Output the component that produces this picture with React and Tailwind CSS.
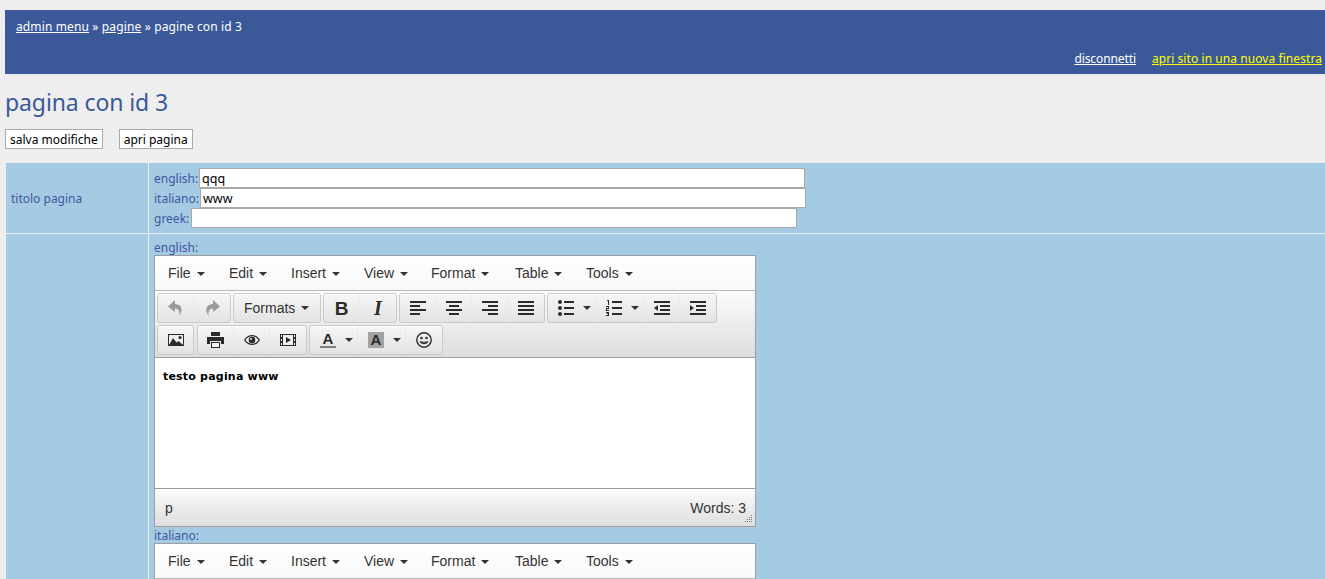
import React from 'react';

const menuItems = [
  ['File', 'w-[61px]'],
  ['Edit', 'w-[62px]'],
  ['Insert', 'w-[73px]'],
  ['View', 'w-[67px]'],
  ['Format', 'w-[84px]'],
  ['Table', 'w-[71px]'],
  ['Tools', 'w-[70px]'],
];

function Caret({ color = '#333' }) {
  return (
    <svg width="8" height="4" viewBox="0 0 8 4" className="shrink-0">
      <path d="M0 0h8L4 4z" fill={color} />
    </svg>
  );
}

function Glyph({ children }) {
  return (
    <svg width="16" height="16" viewBox="0 0 16 16" shapeRendering="crispEdges" className="shrink-0">
      {children}
    </svg>
  );
}

function Lines({ rows }) {
  return (
    <Glyph>
      {rows.map(([x, y, w, h = 2], i) => (
        <rect key={i} x={x} y={y} width={w} height={h} fill="#2b2b2b" />
      ))}
    </Glyph>
  );
}

const AlignLeft = () => <Lines rows={[[0, 1, 16], [0, 5, 10], [0, 9, 16], [0, 13, 10]]} />;
const AlignCenter = () => <Lines rows={[[0, 1, 16], [3, 5, 10], [0, 9, 16], [3, 13, 10]]} />;
const AlignRight = () => <Lines rows={[[0, 1, 16], [6, 5, 10], [0, 9, 16], [6, 13, 10]]} />;
const AlignJustify = () => <Lines rows={[[0, 1, 16], [0, 5, 16], [0, 9, 16], [0, 13, 16]]} />;

const Bullets = () => (
  <Glyph>
    <circle cx="2" cy="2" r="2" fill="#2b2b2b" shapeRendering="auto" />
    <circle cx="2" cy="8" r="2" fill="#2b2b2b" shapeRendering="auto" />
    <circle cx="2" cy="14" r="2" fill="#2b2b2b" shapeRendering="auto" />
    <rect x="6" y="1" width="10" height="2" fill="#2b2b2b" />
    <rect x="6" y="7" width="10" height="2" fill="#2b2b2b" />
    <rect x="6" y="13" width="10" height="2" fill="#2b2b2b" />
  </Glyph>
);

const Numbers = () => (
  <Glyph>
    <path d="M1 0h2v5H2V1H1z" fill="#2b2b2b" />
    <path d="M0 6h3v3H1v1h2v1H0V8h2V7H0z" fill="#2b2b2b" />
    <path d="M0 12h3v4H0v-1h2v-1H1v-1h1v0H0z" fill="#2b2b2b" />
    <rect x="6" y="1" width="10" height="2" fill="#2b2b2b" />
    <rect x="6" y="7" width="10" height="2" fill="#2b2b2b" />
    <rect x="6" y="13" width="10" height="2" fill="#2b2b2b" />
  </Glyph>
);

const Outdent = () => (
  <Glyph>
    <rect x="0" y="1" width="16" height="2" fill="#2b2b2b" />
    <rect x="6" y="5" width="10" height="2" fill="#2b2b2b" />
    <rect x="6" y="9" width="10" height="2" fill="#2b2b2b" />
    <rect x="0" y="13" width="16" height="2" fill="#2b2b2b" />
    <path d="M4 5v6L0 8z" fill="#2b2b2b" shapeRendering="auto" />
  </Glyph>
);

const Indent = () => (
  <Glyph>
    <rect x="0" y="1" width="16" height="2" fill="#2b2b2b" />
    <rect x="6" y="5" width="10" height="2" fill="#2b2b2b" />
    <rect x="6" y="9" width="10" height="2" fill="#2b2b2b" />
    <rect x="0" y="13" width="16" height="2" fill="#2b2b2b" />
    <path d="M0 5v6l4-3z" fill="#2b2b2b" shapeRendering="auto" />
  </Glyph>
);

const Undo = () => (
  <svg width="16" height="16" viewBox="0 0 16 16">
    <path d="M7 0L0 6.500 7 12V8.500c3 0 5 2 4.500 7.500C15 10 14.500 4.500 7 4z" fill="#9a9a9a" />
  </svg>
);

const Redo = () => (
  <svg width="16" height="16" viewBox="0 0 16 16">
    <path d="M9 0l7 6.500L9 12V8.500c-3 0-5 2-4.500 7.500C1 10 1.500 4.500 9 4z" fill="#9a9a9a" />
  </svg>
);

const ImageIcon = () => (
  <svg width="16" height="16" viewBox="0 0 16 16" className="shrink-0">
    <path d="M0 2h16v12H0z" fill="#2b2b2b" />
    <path d="M1 3h14v10H1z" fill="#eee" />
    <path d="M1 13l4-7 3.500 4.500 2-1.500 4.500 4z" fill="#2b2b2b" />
    <circle cx="12" cy="5.500" r="1.600" fill="#2b2b2b" />
  </svg>
);

const PrintIcon = () => (
  <svg width="17" height="16" viewBox="0 0 17 16" shapeRendering="crispEdges" className="shrink-0">
    <path d="M4 0h9v4H4z" fill="#2b2b2b" />
    <path d="M0 5h17v7h-3V9H3v3H0z" fill="#2b2b2b" />
    <path d="M4 10h9v6H4z" fill="#2b2b2b" />
    <path d="M5 11h7v4H5z" fill="#f3f3f3" />
  </svg>
);

const EyeIcon = () => (
  <svg width="16" height="16" viewBox="0 0 16 16" className="shrink-0">
    <path d="M0 8c2-3.500 5-5 8-5s6 1.500 8 5c-2 3.500-5 5-8 5S2 11.500 0 8z" fill="#2b2b2b" />
    <path d="M1.500 8C3.200 5.500 5.500 4.300 8 4.300S12.800 5.500 14.500 8c-1.700 2.500-4 3.700-6.500 3.700S3.200 10.500 1.500 8z" fill="#eee" />
    <circle cx="8" cy="8" r="3.300" fill="#2b2b2b" />
    <circle cx="7" cy="7" r="1" fill="#eee" />
  </svg>
);

const MediaIcon = () => (
  <svg width="16" height="16" viewBox="0 0 16 16" shapeRendering="crispEdges" className="shrink-0">
    <path d="M0 2h16v12H0z" fill="#2b2b2b" />
    <path d="M3 3h10v10H3z" fill="#eee" />
    <path d="M1 3h1v2H1zM1 7h1v2H1zM1 11h1v2H1zM14 3h1v2h-1zM14 7h1v2h-1zM14 11h1v2h-1z" fill="#eee" />
    <path d="M6 5l5 3-5 3z" fill="#2b2b2b" shapeRendering="auto" />
  </svg>
);

const FontColor = () => (
  <div className="relative shrink-0 w-[16px] h-[16px] flex flex-col items-center">
    <span className="[font-family:'Liberation_Sans',sans-serif] font-bold text-[15px] leading-[14px] text-[#2b2b2b]">A</span>
    <span className="absolute bottom-0 left-0 w-[16px] h-[2px] bg-[#808080]" />
  </div>
);

const BackColor = () => (
  <div className="shrink-0 w-[16px] h-[16px] flex justify-center bg-[#a3a3a3]">
    <span className="[font-family:'Liberation_Sans',sans-serif] font-bold text-[15px] leading-[15px] text-[#2b2b2b]">A</span>
  </div>
);

const Smile = () => (
  <svg width="16" height="16" viewBox="0 0 16 16" className="shrink-0">
    <circle cx="8" cy="8" r="7.200" fill="none" stroke="#2b2b2b" strokeWidth="1.400" />
    <circle cx="5.500" cy="6" r="1.300" fill="#2b2b2b" />
    <circle cx="10.500" cy="6" r="1.300" fill="#2b2b2b" />
    <path d="M4 9.500c1 3 7 3 8 0-2 1-6 1-8 0z" fill="#2b2b2b" stroke="#2b2b2b" strokeWidth="0.800" />
  </svg>
);

function Btn({ children, width = 'w-[36px]', last }) {
  return (
    <div className={`${width} h-full flex items-center justify-center ${last ? '' : 'border-r border-[#ebebeb]'}`}>
      {children}
    </div>
  );
}

// split button: icon and caret, icon sits 10px from the left edge
function SplitBtn({ children }) {
  return (
    <div className="w-[48px] h-full flex items-center gap-[9px] pl-[10px] border-r border-[#ebebeb]">
      {children}
      <Caret />
    </div>
  );
}

function Group({ children, width }) {
  return (
    <div className={`${width} h-[30px] flex rounded-[3px] border border-[#c9c9c9] bg-gradient-to-b from-[#f6f6f6] to-[#e3e3e3] shadow-[inset_0_1px_0_#fff]`}>
      {children}
    </div>
  );
}

function MenuBar() {
  return (
    <div className="h-[35px] flex items-center pt-[1px] pl-[13px] bg-gradient-to-b from-white to-[#f8f8f8] border-b border-[#b9b9b9] text-[14px] text-[#333]">
      {menuItems.map(([name, width]) => (
        <div key={name} className={`${width} flex items-center gap-[6px]`}>
          <span>{name}</span>
          <Caret />
        </div>
      ))}
    </div>
  );
}

function Toolbar() {
  return (
    <div className="h-[67px] flex flex-col gap-[2px] pt-[2px] pl-[2px] bg-gradient-to-b from-[#fcfcfc] to-[#dddddd] border-b border-[#9e9e9e]">
      <div className="flex gap-[2px]">
        <Group width="w-[74px]">
          <Btn><Undo /></Btn>
          <Btn last><Redo /></Btn>
        </Group>
        <Group width="w-[88px]">
          <div className="w-full h-full flex items-center gap-[6px] pl-[10px]">
            <span className="text-[14px] text-[#333]">Formats</span>
            <Caret />
          </div>
        </Group>
        <Group width="w-[74px]">
          <Btn>
            <span className="[font-family:'Liberation_Sans',sans-serif] font-bold text-[19px] leading-none text-[#2b2b2b]">B</span>
          </Btn>
          <Btn last>
            <span className="[font-family:'Liberation_Serif',serif] italic font-bold text-[20px] leading-none text-[#2b2b2b]">I</span>
          </Btn>
        </Group>
        <Group width="w-[146px]">
          <Btn><AlignLeft /></Btn>
          <Btn><AlignCenter /></Btn>
          <Btn><AlignRight /></Btn>
          <Btn last><AlignJustify /></Btn>
        </Group>
        <Group width="w-[170px]">
          <SplitBtn><Bullets /></SplitBtn>
          <SplitBtn><Numbers /></SplitBtn>
          <Btn><Outdent /></Btn>
          <Btn last><Indent /></Btn>
        </Group>
      </div>
      <div className="flex gap-[3px]">
        <Group width="w-[37px]">
          <Btn width="w-full" last><ImageIcon /></Btn>
        </Group>
        <Group width="w-[110px]">
          <Btn><PrintIcon /></Btn>
          <Btn><EyeIcon /></Btn>
          <Btn last><MediaIcon /></Btn>
        </Group>
        <Group width="w-[134px] -ml-[1px]">
          <SplitBtn><FontColor /></SplitBtn>
          <SplitBtn><BackColor /></SplitBtn>
          <Btn last><Smile /></Btn>
        </Group>
      </div>
    </div>
  );
}

function Editor({ text }) {
  return (
    <div className="w-[602px] border border-[#9e9e9e] [font-family:'Liberation_Sans',sans-serif]">
      <MenuBar />
      {text && (
        <>
          <Toolbar />
          <div className="h-[131px] bg-white border-b border-[#9e9e9e] px-[8px] pt-[11px] [font-family:'DejaVu_Sans',sans-serif] font-bold text-[11px] tracking-[0.2px] leading-[15px] text-black">
            {text}
          </div>
          <div className="relative h-[37px] flex items-center justify-between pt-[2px] pl-[10px] pr-[9px] bg-gradient-to-b from-[#fbfbfb] to-[#dedede] text-[14px] text-[#333]">
            <span>p</span>
            <span>Words: 3</span>
            <svg width="9" height="9" viewBox="0 0 9 9" shapeRendering="crispEdges" className="absolute right-[2px] bottom-[2px]">
              <path d="M7 0h1v1H7zM5 2h1v1H5zM7 2h1v1H7zM3 4h1v1H3zM5 4h1v1H5zM7 4h1v1H7zM1 6h1v1H1zM3 6h1v1H3zM5 6h1v1H5zM7 6h1v1H7z" fill="#777" />
            </svg>
          </div>
        </>
      )}
    </div>
  );
}

function TitleInput({ label, value, labelWidth }) {
  return (
    <div className="flex items-center h-[20px]">
      <span className={`${labelWidth} pt-[2px]`}>{label}</span>
      <input
        readOnly
        defaultValue={value}
        className="w-[606px] h-[20px] bg-white border border-[#a9a9a9] px-[2px] text-[12.5px] text-black outline-none"
      />
    </div>
  );
}

export default function App() {
  return (
    <div className="h-[579px] overflow-hidden bg-[#eeeeee] pl-[5px] pt-[10px] [font-family:'Noto_Sans',sans-serif] text-[12px]">
      <header className="h-[64px] bg-[#3b5998] text-white pl-[11px] pr-[3px] pt-[8px] flex flex-col justify-between pb-[6px]">
        <div className="tracking-[0.13px]">
          <a href="#" className="underline">admin menu</a> » <a href="#" className="underline">pagine</a> » pagine con id 3
        </div>
        <div className="flex justify-end gap-[16px]">
          <a href="#" className="underline tracking-[-0.1px]">disconnetti</a>
          <a href="#" className="underline text-[#ffff00] tracking-[0.07px]">apri sito in una nuova finestra</a>
        </div>
      </header>

      <h1 className="mt-[12px] h-[33px] text-[23px] tracking-[-0.1px] leading-[32px] text-[#3b5998]">pagina con id 3</h1>

      <div className="mt-[10px] flex gap-[16px]">
        <button className="h-[20px] px-[4px] pt-[1px] bg-white border border-[#a9a9a9] text-black">salva modifiche</button>
        <button className="h-[20px] px-[4px] pt-[1px] bg-white border border-[#a9a9a9] text-black">apri pagina</button>
      </div>

      <div className="mt-[14px] ml-[1px] grid grid-cols-[142px_1fr] gap-[1px] text-[#3f57a0]">
        <div className="h-[70px] bg-[#a5cae4] flex items-center pl-[5px] pt-[2px]">titolo pagina</div>
        <div className="h-[70px] bg-[#a5cae4] pl-[5px] pt-[5px]">
          <TitleInput label="english:" value="qqq" labelWidth="w-[45px]" />
          <TitleInput label="italiano:" value="www" labelWidth="w-[46px]" />
          <TitleInput label="greek:" value="" labelWidth="w-[37px]" />
        </div>
        <div className="h-[345px] bg-[#a5cae4]" />
        <div className="h-[345px] bg-[#a5cae4] pl-[5px] pt-[6px]">
          <div className="h-[15px] leading-[16px]">english:</div>
          <Editor text="testo pagina www" />
          <div className="h-[14px] leading-[14px] mt-[2px]">italiano:</div>
          <Editor />
        </div>
      </div>
    </div>
  );
}
